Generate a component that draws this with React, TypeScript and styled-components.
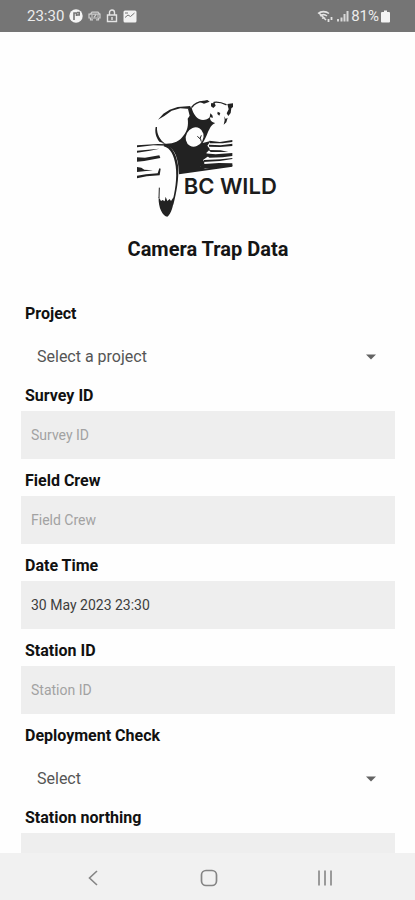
import React from "react";
import styled, { createGlobalStyle } from "styled-components";

const GlobalStyle = createGlobalStyle`
  * { box-sizing: border-box; }
  body { margin: 0; background: #fefefe; font-family: Roboto, "Liberation Sans", sans-serif; }
`;

const Screen = styled.div`
  display: flex;
  flex-direction: column;
  height: 100vh;
  background: #fefefe;
  overflow: hidden;
`;

const StatusBar = styled.header`
  flex: none;
  display: flex;
  justify-content: space-between;
  align-items: center;
  height: 32px;
  padding: 0 25px 0 27px;
  background: #757575;
  color: #ececec;
  font-size: 15px;
  line-height: 18px;
`;

const StatusGroup = styled.div<{ $gap: number }>`
  display: flex;
  align-items: center;
  gap: ${(p) => p.$gap}px;

  svg { display: block; }
`;

const Content = styled.main`
  flex: 1;
  min-height: 0;
  overflow: hidden;
  padding: 63px 20px 0 21px;
`;

const Brand = styled.div`
  display: flex;
  justify-content: center;

  svg { display: block; }
`;

const Title = styled.h1`
  margin: 17px 0 31px;
  text-align: center;
  font-size: 20px;
  line-height: 24px;
  font-weight: 700;
  color: #151515;
`;

const Form = styled.form`
  display: flex;
  flex-direction: column;
`;

const Field = styled.div`
  display: flex;
  flex-direction: column;
`;

const Label = styled.label`
  height: 37px;
  padding: 12px 4px 5px;
  font-size: 16px;
  line-height: 20px;
  font-weight: 700;
  color: #111;
`;

const TextInput = styled.input`
  width: 100%;
  height: 48px;
  padding: 0 10px;
  border: 0;
  border-radius: 0;
  background: #eee;
  color: #3d3d3d;
  font: 400 14px/20px Roboto, "Liberation Sans", sans-serif;

  &::placeholder { color: #a2a2a2; opacity: 1; }
`;

const SelectWrap = styled.div`
  display: grid;
  align-items: center;
  height: 45px;
  padding-top: 10px;

  > * { grid-area: 1 / 1; }
  svg { justify-self: end; margin-right: 19px; pointer-events: none; }
`;

const Select = styled.select`
  appearance: none;
  width: 100%;
  height: 35px;
  padding: 0 40px 0 16px;
  border: 0;
  background: transparent;
  color: #555;
  font: 400 16px/20px Roboto, "Liberation Sans", sans-serif;
`;

const NavBar = styled.nav`
  flex: none;
  display: grid;
  grid-template-columns: repeat(3, 116px);
  justify-content: center;
  height: 47px;
  padding-left: 3px;
  background: #f1f1f1;
`;

const NavButton = styled.button`
  display: flex;
  align-items: center;
  justify-content: center;
  padding: 2px 0 0;
  border: 0;
  background: transparent;
  color: #858585;
`;

function Logo() {
  return (
    <svg width="156" height="125" viewBox="0 0 468 375" role="img" aria-label="BC WILD">
      {/* body shadow and log core */}
      <path
        fill="#222"
        d="M96 145 C125 149 148 140 160 122 C172 108 176 90 173 71 L179 62 L174 42 L184 35 C188 50 194 64 207 72 C219 78 232 74 240 66 C239 76 246 82 256 84 C244 89 240 99 234 111 C228 126 224 136 218 144 L242 138 L232 152 L240 163 L228 175 L239 181 L219 195 L224 205 L211 215 L226 221 L307 209 L307 215 L147 238 C146 204 140 171 119 157 Z"
      />
      {/* paw */}
      <ellipse cx="194" cy="126" rx="26" ry="30" transform="rotate(28 194 126)" fill="#fefefe" />
      <path fill="none" stroke="#222" strokeWidth="3" d="M202 124 L210 131 L214 121 M211 130 L214 140" />
      {/* back and rump */}
      <path fill="#222" d="M84 74 L100 56 L119 44 L143 36 L181 33 L181 42 L151 40 L125 47 L103 63 Z M77 96 L81 96 C80 118 90 136 106 146 L88 140 C77 126 74 110 77 96 Z" />
      {/* head */}
      <path fill="none" stroke="#222" strokeWidth="4" strokeLinecap="round" d="M186 36 C194 25 207 20 220 19 M252 22 C266 20 278 24 288 29" />
      <path fill="#222" d="M208 20 L232 15 L239 20 L222 26 Z M243 25 L254 24 L257 32 L250 39 L243 34 Z M292 27 L309 25 L309 36 L304 40 L302 54 L295 63 L290 55 L296 43 Z M263 50 L271 54 L268 62 L262 57 Z M283 64 L287 72 L293 68 L289 82 L281 89 L284 76 Z M241 55 L247 61 L249 68 L239 67 Z" />
      {/* tail */}
      <path
        fill="#222"
        d="M103 148 C124 152 139 175 144 211 C148 250 139 295 130 329 L126 326 C135 291 142 250 137 213 C132 180 122 160 101 154 Z M86 306 L93 318 L98 315 L104 319 L107 305 L112 318 L119 312 L123 318 L131 306 C132 331 123 358 112 365 C99 365 84 338 86 306 Z"
      />
      <path fill="none" stroke="#222" strokeWidth="3" d="M88 278 L87 309" />
      {/* log grain */}
      <path fill="#222" d="M21 151 L84 147 L116 148 L114 152 L70 151 L21 157 Z M21 167 L88 161 L60 167 L21 173 Z M21 187 L45 188 L88 181 L91 189 L43 198 L21 200 Z M21 216 L34 218 L43 224 L69 226 L21 231 Z M21 242 L48 238 L83 235 L88 220 L92 221 L89 241 L50 244 L21 250 Z" />
      <path fill="#222" d="M238 137 L270 141 L307 135 L307 141 L278 145 L240 145 Z M237 149 L272 151 L307 146 L307 153 L270 156 L237 155 Z M236 165 L272 166 L295 171 L242 171 Z M221 175 L257 178 L307 174 L307 183 L278 187 L238 188 Z M222 195 L272 193 L307 189 L307 192 L270 198 L219 201 Z M212 208 L267 204 L307 205 L307 213 L240 221 L210 220 Z" />
      <text x="161" y="298" fontFamily="Inter, sans-serif" fontWeight="600" fontSize="66" fill="#1c1c1c">
        BC WILD
      </text>
    </svg>
  );
}

function Caret() {
  return (
    <svg width="10" height="6" viewBox="0 0 10 6" aria-hidden="true">
      <path d="M0 0.5H10L5 5.5Z" fill="#636363" />
    </svg>
  );
}

type TextFieldProps = { id: string; label: string; placeholder?: string; value?: string };

function TextField({ id, label, placeholder, value }: TextFieldProps) {
  return (
    <Field>
      <Label htmlFor={id}>{label}</Label>
      <TextInput id={id} type="text" placeholder={placeholder} defaultValue={value} />
    </Field>
  );
}

function SelectField({ id, label, prompt }: { id: string; label: string; prompt: string }) {
  return (
    <Field>
      <Label htmlFor={id}>{label}</Label>
      <SelectWrap>
        <Select id={id} defaultValue="">
          <option value="">{prompt}</option>
        </Select>
        <Caret />
      </SelectWrap>
    </Field>
  );
}

export default function App() {
  return (
    <>
      <GlobalStyle />
      <Screen>
        <StatusBar>
          <StatusGroup $gap={5}>
            <span>23:30</span>
            <svg width="14" height="14" viewBox="0 0 14 14">
              <circle cx="7" cy="7" r="6.7" fill="#f4f4f4" />
              <path d="M5 11V4H7.5V7M8 3.5H10.2V6H8" fill="none" stroke="#757575" strokeWidth="1.6" />
            </svg>
            <svg width="13" height="10" viewBox="0 0 13 10" fill="none" stroke="#cfcfcf" strokeWidth="1.2">
              <path d="M2.5 3L4 1.2H10L11.5 3M1 3.2H12V7H1ZM2.5 7.2V8.8H5M8 8.8H10.5V7.2M3 5H5M6 6L8 4M9 5H11" />
            </svg>
            <svg width="12" height="14" viewBox="0 0 12 14" fill="none" stroke="#e4e4e4" strokeWidth="1.4">
              <path d="M3.5 6V3.5A2.5 2.5 0 0 1 8.5 3.5V6M1.5 6H10.5V12.5H1.5ZM6 8V11" />
            </svg>
            <svg width="14" height="13" viewBox="0 0 14 13">
              <rect x="0.5" y="0.5" width="13" height="12" rx="1.5" fill="#f2f2f2" />
              <path d="M2 7.5L5 5L7.5 6.5L11.5 3M2 3H5" fill="none" stroke="#757575" strokeWidth="1" />
            </svg>
          </StatusGroup>
          <StatusGroup $gap={2}>
            <svg width="17" height="13" viewBox="0 0 17 13" fill="none" stroke="#e4e4e4" strokeWidth="1.6">
              <path d="M1 3.5C4 1 9 1 12 3.5M3 6C5 4.4 8 4.4 10 6M5 8.3C6 7.5 7 7.5 8 8.3M2.5 3.5L9 10" />
              <path d="M11.5 9V12M14.5 7V10" strokeWidth="1.8" />
            </svg>
            <svg width="13" height="12" viewBox="0 0 13 12" fill="#d8d8d8">
              <path d="M1 9H3V11.5H1ZM4.5 7.5H6.5V11.5H4.5ZM7.5 4H9.5V11.5H7.5ZM10.5 1H12.5V11.5H10.5Z" />
            </svg>
            <span>81%</span>
            <svg width="9" height="13" viewBox="0 0 9 13" fill="#f4f4f4">
              <path d="M3 0.5H6V2H8Q9 2 9 3V11.5Q9 12.5 8 12.5H1Q0 12.5 0 11.5V3Q0 2 1 2H3Z" />
            </svg>
          </StatusGroup>
        </StatusBar>
        <Content>
          <Brand>
            <Logo />
          </Brand>
          <Title>Camera Trap Data</Title>
          <Form>
            <SelectField id="project" label="Project" prompt="Select a project" />
            <TextField id="survey" label="Survey ID" placeholder="Survey ID" />
            <TextField id="crew" label="Field Crew" placeholder="Field Crew" />
            <TextField id="date" label="Date Time" value="30 May 2023 23:30" />
            <TextField id="station" label="Station ID" placeholder="Station ID" />
            <SelectField id="deployment" label="Deployment Check" prompt="Select" />
            <TextField id="northing" label="Station northing" />
          </Form>
        </Content>
        <NavBar>
          <NavButton type="button" aria-label="Back">
            <svg width="10" height="16" viewBox="0 0 10 16" fill="none" stroke="currentColor" strokeWidth="1.6">
              <path d="M9 1L1.5 8L9 15" />
            </svg>
          </NavButton>
          <NavButton type="button" aria-label="Home">
            <svg width="18" height="18" viewBox="0 0 18 18" fill="none" stroke="currentColor" strokeWidth="1.7">
              <rect x="1.5" y="1.5" width="15" height="15" rx="4.5" />
            </svg>
          </NavButton>
          <NavButton type="button" aria-label="Recent apps">
            <svg width="16" height="16" viewBox="0 0 16 16" fill="none" stroke="currentColor" strokeWidth="1.6">
              <path d="M2 0.5V15.5M8 0.5V15.5M14 0.5V15.5" />
            </svg>
          </NavButton>
        </NavBar>
      </Screen>
    </>
  );
}
